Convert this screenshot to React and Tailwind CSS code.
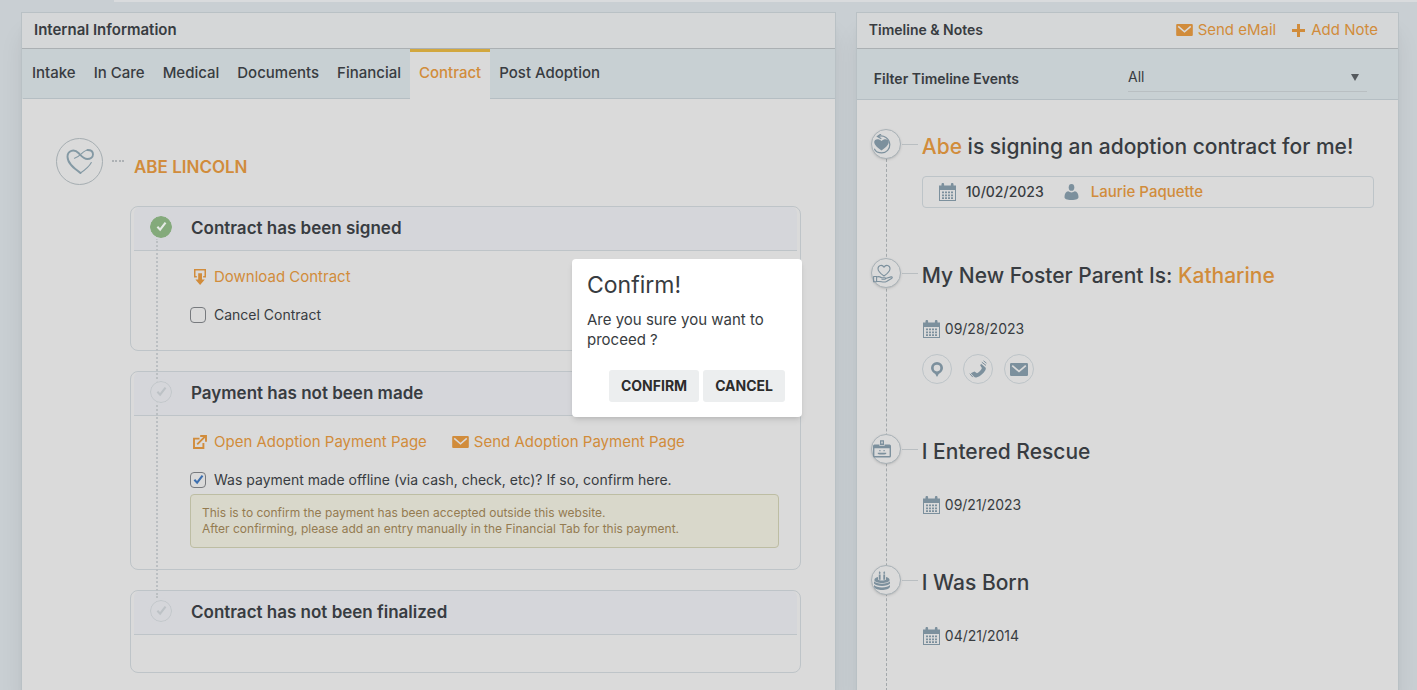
import { useState } from 'react';

const tabs = ['Intake', 'In Care', 'Medical', 'Documents', 'Financial', 'Contract', 'Post Adoption'];

const MailIcon = ({ className }) => (
    <svg viewBox="0 0 18 13" className={className} fill="currentColor" aria-hidden="true">
        <rect width="18" height="13" rx="1.2" />
        <path d="M2.2 2.6 9 8.4l6.8-5.8" fill="none" stroke="#dadada" strokeWidth="1.7" />
    </svg>
);

const PlusIcon = ({ className }) => (
    <svg viewBox="0 0 13 13" className={className} fill="currentColor" aria-hidden="true">
        <path d="M5 0h3v5h5v3H8v5H5V8H0V5h5z" />
    </svg>
);

const DownloadIcon = ({ className }) => (
    <svg viewBox="0 0 12 16" className={className} fill="currentColor" aria-hidden="true">
        <path d="M0 0h12v8.500H9.200V7h1.300V1.600h-9V7h1.300v1.500H0z" />
        <path d="M4.200 4.300h3.800v6.300h2.800L6.100 16l-4.700-5.400h2.800z" />
    </svg>
);

const OpenIcon = ({ className }) => (
    <svg viewBox="0 0 14 14" className={className} fill="none" stroke="currentColor" strokeWidth="1.9" aria-hidden="true">
        <path d="M6.500 3.600H1v9.400h9.400V8M4.200 9.400l8-8" />
        <path d="M7.200 1H13v5.700" />
    </svg>
);

const CheckIcon = ({ className }) => (
    <svg viewBox="0 0 12 12" className={className} fill="none" stroke="currentColor" strokeWidth="2.3" aria-hidden="true">
        <path d="m1.500 6.300 3 3.200L10.400 1.800" />
    </svg>
);

const HeartLoopIcon = ({ className }) => (
    <svg viewBox="0 0 28 25" className={className} fill="none" stroke="currentColor" strokeLinecap="round" aria-hidden="true">
        <path d="M14.500 24C9.500 20.500 1.500 15 1.500 7.800 1.500 1.200 8.300-.2 12.500 4c2.800 2.800 5.200 6 8.800 6 3.200 0 5.700-1.900 5.700-4.700S24.800 1 21.500 1" strokeWidth="1.900" />
        <path d="M22 1c-5 0-6.500 6-13.500 8.300M14.500 24c3.800-2.600 8.500-6 10.800-10.500" strokeWidth="1.100" />
    </svg>
);

const CalendarIcon = ({ className }) => (
    <svg viewBox="0 0 17 18" className={className} fill="currentColor" aria-hidden="true">
        <path d="M0 2.500h2.500V1.200a1.200 1.200 0 0 1 2.600 0v1.300h6.800V1.200a1.200 1.200 0 0 1 2.600 0v1.300H17V18H0zM1 7v10h15V7z" fillRule="evenodd" />
        <path d="M3 8.500h2v1.800H3zm3 0h2v1.800H6zm3 0h2v1.800H9zm3 0h2v1.800h-2zM3 11.500h2v1.800H3zm3 0h2v1.800H6zm3 0h2v1.800H9zm3 0h2v1.800h-2zM3 14.300h2v1.700H3zm3 0h2v1.700H6zm3 0h2v1.700H9zm3 0h2v1.700h-2z" />
    </svg>
);

const PersonIcon = ({ className }) => (
    <svg viewBox="0 0 14 16" className={className} fill="currentColor" aria-hidden="true">
        <ellipse cx="7" cy="3.400" rx="2.800" ry="3.400" />
        <path d="M0 13c0-3.500 1.500-5.200 3.700-5.700 1.800 1.500 4.800 1.500 6.600 0C12.500 7.800 14 9.500 14 13c0 2-2 3-7 3s-7-1-7-3z" />
    </svg>
);

const PinIcon = ({ className }) => (
    <svg viewBox="0 0 12 15" className={className} fill="currentColor" aria-hidden="true">
        <path fillRule="evenodd" d="M6 0a6 6 0 0 1 6 6c0 3-2.500 4.700-4.300 6L6 15l-1.700-3C2.500 10.700 0 9 0 6a6 6 0 0 1 6-6zm0 2.800a3.300 3.300 0 1 0 0 6.600 3.300 3.300 0 0 0 0-6.600z" />
    </svg>
);

const PhoneIcon = ({ className }) => (
    <svg viewBox="0 0 18 18" className={className} fill="currentColor" aria-hidden="true">
        <path d="m12 3.800 4.300 3.400c.8 1 .7 2-.1 3.200-2 3.200-4.600 5.500-8.200 6.900-1.200.4-2.400.2-3-.5l-3.200-3.600 3.600-1.700L8 13.200c2.400-1.200 3.900-2.900 4.900-5.300L11.200 5.600z" />
        <path d="m12.800 2.200 4.200 3.200M14.500.8l3 2.400M.8 13.700l3 3.400" fill="none" stroke="currentColor" strokeWidth="1" />
    </svg>
);

const HeartCycleIcon = ({ className }) => (
    <svg viewBox="0 0 18 20" className={className} fill="currentColor" aria-hidden="true">
        <path d="M8.500 16.500C5 14 1.200 11 1.200 8 1.200 4.800 5.800 4 8.500 7c2.700-3 7.300-2.200 7.300 1 0 3-3.800 6-7.300 8.500z" />
        <path d="M5.500 2.300c5-1.300 11 1.700 11.300 8.200.2 4.500-3.300 8.400-8 8.400-3.500 0-6.300-1.500-7.500-4.200" fill="none" stroke="currentColor" strokeWidth="1.200" />
        <path d="M8 0 4.500 2.500 8.300 4.800" fill="none" stroke="currentColor" strokeWidth="1.300" />
    </svg>
);

const HandHeartIcon = ({ className }) => (
    <svg viewBox="0 0 20 19" className={className} fill="none" stroke="currentColor" strokeWidth="1.100" strokeLinejoin="round" aria-hidden="true">
        <path d="M11 12C7.500 9.500 5 7.500 5 4.700 5 1 9.400.2 11 3.200 12.600.2 17 1 17 4.700c0 2.800-2.500 4.800-6 7.300z" />
        <path d="M.6 12.500h3v5.200h-3zM3.600 13c2-.8 3.500-.2 5 .8h3c1.300 0 1.300 1.500 0 1.500H8.500M12.500 14.500l5.500-1.600c1.500-.3 1.700 1 .5 1.600l-5 3c-1.500.8-3.500.6-5 .3l-5-.6" />
    </svg>
);

const BadgeIcon = ({ className }) => (
    <svg viewBox="0 0 18 18" className={className} fill="currentColor" aria-hidden="true">
        <path fillRule="evenodd" d="M1.500 4.500h5V6h5V4.500h5A1.500 1.500 0 0 1 18 6v10a1.500 1.500 0 0 1-1.500 1.500h-15A1.500 1.500 0 0 1 0 16V6a1.500 1.500 0 0 1 1.500-1.500zM1.400 8.200V16h15.200V8.200z" />
        <path fillRule="evenodd" d="M7 .3h4v5H7zm1.300 1.300v2h1.400v-2z" />
        <path d="M6.300 10h1.200v1.200H6.300zm4.200 0h1.200v1.200h-1.200zM4.800 12.800h8.400v1.100l-2 .7H6.800l-2-.7z" />
    </svg>
);

const CakeIcon = ({ className }) => (
    <svg viewBox="0 0 16 19" className={className} fill="currentColor" aria-hidden="true">
        <path d="M4.800 3.600h1.800v5.200H4.800zM9.300 3.600h1.800v5.200H9.300zM5.700 0l1 2-1 1.200-1-1.200zM10.200 0l1 2-1 1.200-1-1.200z" />
        <path d="M4 6C1.500 6.600.4 7.700.4 9c0 3.900 15.200 3.900 15.200 0 0-1.300-1.100-2.400-3.600-3v2.700c-1.500 1-6.500 1-8 0z" />
        <path d="M0 10.300c2 3.200 14 3.200 16 0v2.200c-2 3.300-14 3.300-16 0zM0 14c2 3.200 14 3.200 16 0v1.700c-1.500 4.300-14.500 4.300-16 0z" />
    </svg>
);

const Step = ({ title, done, className, children }) => (
    <section className={`rounded-lg border border-[#bec4c8] px-[3px] ${className}`}>
        <header className="flex h-11 items-center rounded-t-md border-b border-[#bec4c8] bg-[#d5d6da] pl-4">
            <span className={`z-10 -mt-1 flex size-[22px] items-center justify-center rounded-full border outline-2 outline-[#d5d6da] ${done ? 'border-[#84aa7b] bg-[#84aa7b] text-[#e5eae5]' : 'border-[#c2c7ca] bg-[#d5d6da] text-[#bdc2c6]'}`}>
                <CheckIcon className="size-[11px]" />
            </span>
            <h3 className="ml-[19px] text-[17px] font-semibold">{title}</h3>
        </header>
        {children}
    </section>
);

const CheckRow = ({ id, label, defaultChecked }) => (
    <div className="flex h-5 items-center">
        <span className="relative flex size-4">
            <input id={id} type="checkbox" defaultChecked={defaultChecked} className="peer size-4 appearance-none rounded-[4px] border border-[#777a7e]" />
            <CheckIcon className="pointer-events-none absolute top-[2px] left-[3px] hidden size-[11px] text-[#3d6faf] peer-checked:block" />
        </span>
        <label htmlFor={id} className="ml-2 text-sm">{label}</label>
    </div>
);

const TimelineEvent = ({ icon, title, children }) => (
    <li className="mb-[50px] flex items-start">
        <span className="z-10 flex size-[30px] shrink-0 items-center rounded-full border border-[#a9b2b7] bg-[#dadada] pl-[1px] text-[#7c909d] shadow-sm">
            {icon}
        </span>
        <span className="mt-[15px] ml-px w-4 shrink-0 border-t border-[#b9bec1]" />
        <div className="ml-1 min-w-0 flex-1 pt-[3px]">
            <h3 className="text-[21px] leading-[30px] font-medium whitespace-nowrap">{title}</h3>
            {children}
        </div>
    </li>
);

const EventDate = ({ date }) => (
    <p className="mt-7 flex h-5 items-center text-sm">
        <CalendarIcon className="mr-[5px] ml-[1px] h-[18px] w-[17px] text-[#7c909d]" />
        {date}
    </p>
);

const ContactButton = ({ label, children }) => (
    <button type="button" aria-label={label} className="flex size-[30px] items-center justify-center rounded-full border border-[#bdc4c8] text-[#7c909d]">
        {children}
    </button>
);

export default function App() {
    const [activeTab, setActiveTab] = useState('Contract');
    const [confirmOpen, setConfirmOpen] = useState(true);

    return (
        <div className="relative flex min-h-screen flex-col bg-[#c9cfd3] font-['Inter','Open_Sans',sans-serif] text-[#383c41]">
            <div className="ml-[114px] h-[2px] bg-[#d9dbdd] shadow-md" />

            <main className="mt-[10px] grid flex-1 grid-cols-[3fr_2fr] gap-5 pr-[18px] pl-[21px]">
                <section className="flex min-w-0 flex-col border border-b-0 border-[#b9c1c5] bg-[#dadada] shadow-xl">
                    <h2 className="flex h-9 items-center border-b border-[#abb0b3] bg-[#d5d7d8] px-3 pb-px text-[15px] font-semibold">Internal Information</h2>
                    <nav className="flex h-[50px] bg-[#c8d0d3] pl-px">
                        {tabs.map((tab) => (
                            <button
                                key={tab}
                                type="button"
                                onClick={() => setActiveTab(tab)}
                                className={`border-t-3 border-b px-[9px] pb-[3px] text-[15px] font-medium whitespace-nowrap ${activeTab === tab ? 'border-t-[#d2a73e] border-b-[#dadada] bg-[#dadada] text-[#d18c3b]' : 'border-t-transparent border-b-[#b5bec3]'}`}
                            >
                                {tab}
                            </button>
                        ))}
                        <span className="flex-1 border-b border-[#b5bec3]" />
                    </nav>

                    <div className="pt-[38px] pr-[34px] pl-[34px]">
                        <div className="flex h-12 items-center">
                            <span className="flex size-[47px] items-center justify-center rounded-full border border-[#a5adb1] text-[#8499a4]">
                                <HeartLoopIcon className="h-[25px] w-[28px]" />
                            </span>
                            <span className="ml-[9px] w-3 border-t-2 border-dotted border-[#adb1b4]" />
                            <h2 className="mt-[14px] ml-[10px] text-[17px] font-semibold text-[#d18c3b]">ABE LINCOLN</h2>
                        </div>

                        <div className="relative mt-[21px] ml-[74px] flex flex-col gap-5">
                            <Step title="Contract has been signed" done className="pb-[25px]">
                                <div className="pt-4 pl-14">
                                    <a href="#download" className="flex h-5 items-center text-[15px] text-[#d18c3b]">
                                        <DownloadIcon className="mr-2 ml-1 h-4 w-3" />
                                        Download Contract
                                    </a>
                                    <div className="mt-[18px]">
                                        <CheckRow id="cancel-contract" label="Cancel Contract" />
                                    </div>
                                </div>
                            </Step>

                            <Step title="Payment has not been made" className="pb-[21px]">
                                <div className="pt-4 pr-[18px] pl-14">
                                    <div className="flex h-5 items-center text-[15px] text-[#d18c3b]">
                                        <a href="#open-payment" className="flex items-center">
                                            <OpenIcon className="mr-[7px] ml-[3px] size-[14px]" />
                                            Open Adoption Payment Page
                                        </a>
                                        <a href="#send-payment" className="ml-[25px] flex items-center">
                                            <MailIcon className="mr-[5px] h-3 w-[17px]" />
                                            Send Adoption Payment Page
                                        </a>
                                    </div>
                                    <div className="mt-[18px]">
                                        <CheckRow id="paid-offline" label="Was payment made offline (via cash, check, etc)? If so, confirm here." defaultChecked />
                                    </div>
                                    <p className="mt-1 rounded-[4px] border border-[#bdbda3] bg-[#d9d8cb] px-[11px] py-[10px] text-xs leading-4 text-[#947b51]">
                                        This is to confirm the payment has been accepted outside this website.
                                        <br />
                                        After confirming, please add an entry manually in the Financial Tab for this payment.
                                    </p>
                                </div>
                            </Step>

                            <Step title="Contract has not been finalized" className="pb-[37px]" />

                            <span className="absolute top-8 bottom-[75px] left-[26px] border-l-2 border-dotted border-[#bbbfc2]" />
                        </div>
                    </div>
                </section>

                <section className="flex min-w-0 flex-col border border-b-0 border-[#b9c1c5] bg-[#dadada] shadow-xl">
                    <header className="flex h-9 items-center border-b border-[#abb0b3] bg-[#d5d7d8] pr-5 pb-px pl-3 text-[15px]">
                        <h2 className="flex-1 text-sm font-semibold">Timeline &amp; Notes</h2>
                        <button type="button" className="flex items-center text-[#d18c3b]">
                            <MailIcon className="mr-[5px] h-3 w-[17px]" />
                            Send eMail
                        </button>
                        <button type="button" className="ml-4 flex items-center text-[#d18c3b]">
                            <PlusIcon className="mr-[6px] size-[13px]" />
                            Add Note
                        </button>
                    </header>
                    <div className="flex h-[51px] items-center border-b border-[#b5bec3] bg-[#c8d0d3] pr-[31px] pl-[17px] text-sm">
                        <label htmlFor="event-filter" className="flex-1 pt-[10px] font-semibold">Filter Timeline Events</label>
                        <span className="relative w-[239px]">
                            <select id="event-filter" className="mt-[6px] h-[30px] w-full appearance-none border-b border-[#b9bfc2] bg-transparent">
                                <option>All</option>
                            </select>
                            <svg viewBox="0 0 8 7" className="pointer-events-none absolute top-[18px] right-2 h-[7px] w-2" fill="#55595d" aria-hidden="true">
                                <path d="M0 0h8L4 7z" />
                            </svg>
                        </span>
                    </div>

                    <ol className="relative flex-1 pt-[29px] pr-6 pl-[14px]">
                        <span className="absolute top-11 bottom-0 left-[29px] border-l border-dashed border-[#a3a8ab]" />
                        <TimelineEvent
                            icon={<HeartCycleIcon className="h-5 w-[18px]" />}
                            title={<><a href="#abe" className="text-[#d18c3b]">Abe</a> is signing an adoption contract for me!</>}
                        >
                            <p className="mt-[14px] flex h-8 items-center rounded-[4px] border border-[#bdc4c8] pl-4 text-sm font-medium">
                                <CalendarIcon className="h-[18px] w-[17px] text-[#7c909d]" />
                                <span className="ml-[10px]">10/02/2023</span>
                                <PersonIcon className="ml-5 h-4 w-[15px] text-[#7c909d]" />
                                <a href="#laurie" className="ml-3 text-[15px] text-[#d18c3b]">Laurie Paquette</a>
                            </p>
                        </TimelineEvent>
                        <TimelineEvent
                            icon={<HandHeartIcon className="h-[19px] w-5" />}
                            title={<>My New Foster Parent Is: <a href="#katharine" className="text-[#d18c3b]">Katharine</a></>}
                        >
                            <EventDate date="09/28/2023" />
                            <div className="mt-[15px] flex gap-[11px]">
                                <ContactButton label="Address"><PinIcon className="h-[15px] w-3" /></ContactButton>
                                <ContactButton label="Phone"><PhoneIcon className="size-[18px]" /></ContactButton>
                                <ContactButton label="Email"><MailIcon className="h-[13px] w-[18px]" /></ContactButton>
                            </div>
                        </TimelineEvent>
                        <TimelineEvent icon={<BadgeIcon className="size-[18px]" />} title="I Entered Rescue">
                            <EventDate date="09/21/2023" />
                        </TimelineEvent>
                        <TimelineEvent icon={<CakeIcon className="ml-px h-[19px] w-4" />} title="I Was Born">
                            <EventDate date="04/21/2014" />
                        </TimelineEvent>
                    </ol>
                </section>
            </main>

            {confirmOpen && (
                <div role="dialog" aria-labelledby="confirm-title" className="absolute top-[259px] left-[572px] z-20 w-[230px] rounded-[4px] bg-white px-[15px] pt-[11px] pb-[15px] shadow-md">
                    <h2 id="confirm-title" className="text-[23px] leading-[30px]">Confirm!</h2>
                    <p className="mt-[10px] text-[15px] leading-5">Are you sure you want to proceed ?</p>
                    <div className="mt-5 mr-[2px] flex justify-end gap-1 text-sm font-bold text-[#2c2c2c]">
                        <button type="button" onClick={() => setConfirmOpen(false)} className="h-8 rounded-[3px] bg-[#eceeef] px-3">CONFIRM</button>
                        <button type="button" onClick={() => setConfirmOpen(false)} className="h-8 rounded-[3px] bg-[#eceeef] px-3">CANCEL</button>
                    </div>
                </div>
            )}
        </div>
    );
}
